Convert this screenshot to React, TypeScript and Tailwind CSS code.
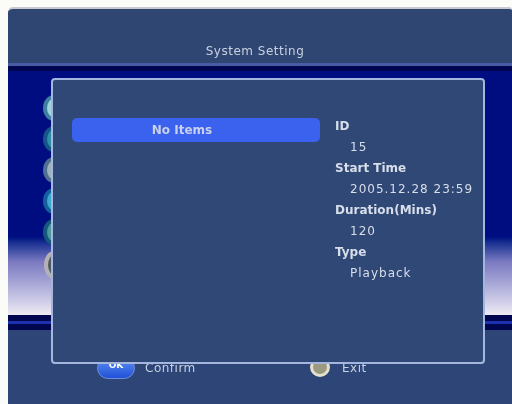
const infoRows = [
  { label: 'ID', value: '15' },
  { label: 'Start Time', value: '2005.12.28 23:59' },
  { label: 'Duration(Mins)', value: '120' },
  { label: 'Type', value: 'Playback' },
];

const menuIcons = [
  { edge: '#3f7f9f', body: '#9fd4dc', shine: '#f6fcff' },
  { edge: '#15558a', body: '#2f8ea8', shine: '#62b8b8' },
  { edge: '#4f7090', body: '#9db4bc', shine: '#dce6ee' },
  { edge: '#14609f', body: '#3fa8d0', shine: '#58c0dc' },
  { edge: '#15587a', body: '#4f9aa0', shine: '#d8ece8' },
];

function MenuIcon({ edge, body, shine }: { edge: string; body: string; shine: string }) {
  return (
    <svg width="24" height="26" viewBox="0 0 24 26" className="block">
      <ellipse cx="12" cy="13" rx="11" ry="13" fill={edge} />
      <ellipse cx="13" cy="13" rx="8" ry="10" fill={body} />
      <ellipse cx="16" cy="12" rx="4" ry="7" fill={shine} />
    </svg>
  );
}

function RingIcon() {
  return (
    <svg width="24" height="30" viewBox="0 0 24 30" className="block">
      <ellipse cx="12" cy="15" rx="10" ry="14" fill="#b4b0b8" />
      <ellipse cx="14" cy="15" rx="8" ry="11" fill="#4f5a60" />
      <ellipse cx="17" cy="15" rx="8" ry="9" fill="#85858f" />
    </svg>
  );
}

export default function App() {
  return (
    <div className="relative w-[512px] h-[404px] overflow-hidden bg-[#fbfbf8] font-['DejaVu_Sans',sans-serif]">
      <div className="blur-[0.7px] absolute inset-0 pl-[8px] pt-[7px]">
        <div className="h-[397px] flex flex-col rounded-tl-[5px] rounded-tr-[3px] overflow-hidden border-t-[2px] border-[#c9c9d2]">
          <div className="h-[57px] shrink-0 bg-[#2f4673] border-b-[3px] border-[#4a5ba6] flex items-end justify-center pr-[10px] pb-[4px]">
            <span className="text-[12px] leading-[16px] tracking-[0.5px] text-[#c9d1e0]">System Setting</span>
          </div>

          <div className="h-[249px] shrink-0 bg-gradient-to-b from-[#000d80] from-[68%] via-[#7a78c0] via-[78%] to-[#efebf4] border-t-[5px] border-[#00074e] pl-[34px] pt-[24px] flex flex-col gap-[5px]">
            {menuIcons.map((icon) => (
              <MenuIcon key={icon.edge} {...icon} />
            ))}
            <RingIcon />
          </div>

          <div className="h-[15px] shrink-0 bg-[#00074e] flex flex-col justify-center">
            <div className="h-[3px] bg-[#1c30b0]" />
          </div>

          <div className="flex-1 bg-[#2e4577] flex items-start pt-[27px]">
            <div className="ml-[89px] w-[38px] h-[22px] rounded-full bg-gradient-to-b from-[#5f8cf0] to-[#1f50d8] border border-[#6f8fd8] flex justify-center pt-[2px]">
              <span className="text-[9px] leading-[11px] font-bold text-white">OK</span>
            </div>
            <span className="ml-[10px] mt-[4px] w-[53px] text-[12px] leading-[14px] tracking-[0.5px] text-[#c9d1e0]">Confirm</span>
            <div className="ml-[112px] w-[20px] h-[20px] rounded-full bg-[#9a9a80] border-[3px] border-[#e4e0cc]" />
            <span className="ml-[12px] mt-[4px] text-[12px] leading-[14px] tracking-[0.5px] text-[#c9d1e0]">Exit</span>
          </div>
        </div>

        <div className="absolute left-[51px] top-[78px] w-[434px] h-[286px] rounded-[4px] border-2 border-[#a4b6de] bg-[#2f4875] pl-[19px] pt-[38px] flex items-start gap-[15px]">
          <div className="w-[248px] h-[24px] rounded-[5px] bg-[#3a62ee] flex items-center justify-center pr-[28px]">
            <span className="text-[12px] font-bold text-[#c8d0ea]">No Items</span>
          </div>
          <div className="flex flex-col -mt-[2px] text-[#d8deea]">
            {infoRows.map((row) => (
              <div key={row.label}>
                <div className="h-[21px] text-[12px] leading-[21px] font-bold whitespace-nowrap">{row.label}</div>
                <div className="h-[21px] pl-[15px] text-[12px] leading-[21px] tracking-[1px] whitespace-nowrap">{row.value}</div>
              </div>
            ))}
          </div>
        </div>
      </div>
    </div>
  );
}
